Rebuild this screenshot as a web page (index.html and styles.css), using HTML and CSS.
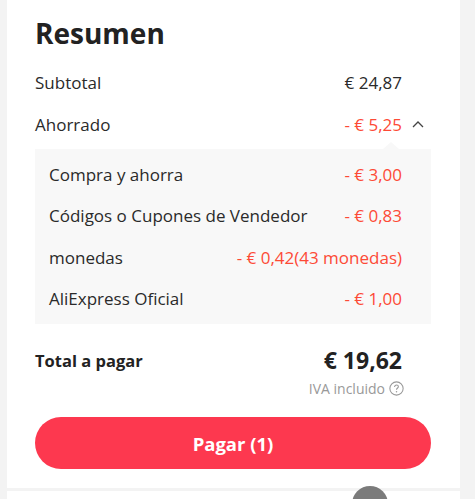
FILE: index.html
```html
<!DOCTYPE html>
<html lang="es">
<head>
<meta charset="utf-8">
<title>Resumen</title>
<link rel="stylesheet" href="styles.css">
</head>
<body>
<div class="page">
  <section class="card summary">
    <h1 class="title">Resumen</h1>
    <div class="row">
      <span class="label">Subtotal</span>
      <span class="value">€ 24,87</span>
    </div>
    <div class="row row-toggle">
      <span class="label">Ahorrado</span>
      <span class="right">
        <span class="value red">- € 5,25</span>
        <svg class="chev" width="12" height="8" viewBox="0 0 12 8"><path d="M1 7 L6 2 L11 7" fill="none" stroke="#444" stroke-width="1.3"/></svg>
      </span>
    </div>
    <div class="details">
      <div class="drow"><span>Compra y ahorra</span><span class="red">- € 3,00</span></div>
      <div class="drow"><span>Códigos o Cupones de Vendedor</span><span class="red">- € 0,83</span></div>
      <div class="drow"><span>monedas</span><span class="red">- € 0,42(43 monedas)</span></div>
      <div class="drow"><span>AliExpress Oficial</span><span class="red">- € 1,00</span></div>
    </div>
    <div class="total">
      <span class="total-label">Total a pagar</span>
      <span class="total-value">€ 19,62</span>
    </div>
    <div class="tax">
      <span>IVA incluido</span>
      <svg class="help" width="15" height="15" viewBox="0 0 14 14"><circle cx="7" cy="7" r="6.2" fill="none" stroke="#999" stroke-width="1"/><path d="M5.2 5.5 C5.2 4.4 6 3.8 7 3.8 C8 3.8 8.8 4.4 8.8 5.4 C8.8 6.5 7 6.7 7 8.2" fill="none" stroke="#999" stroke-width="1"/><circle cx="7" cy="10" r="0.7" fill="#999"/></svg>
    </div>
    <button class="pay">Pagar (1)</button>
  </section>
  <section class="card next"></section>
</div>
<div class="fab"></div>
</body>
</html>
```
FILE: styles.css
```css
html, body {
  margin: 0;
  padding: 0;
  background: #f3f3f3;
  font-family: "Open Sans", "Liberation Sans", sans-serif;
  color: #2a2a2a;
}
.page {
  padding: 0 15px 0 7px;
  display: flex;
  flex-direction: column;
  gap: 3px;
}
.card {
  background: #fff;
}
.summary {
  padding: 13px 29px 19px 28px;
  display: flex;
  flex-direction: column;
}
.title {
  margin: 0 0 8px;
  font-size: 28px;
  line-height: 40px;
  font-weight: 700;
  color: #222;
}
.row {
  height: 42px;
  display: flex;
  align-items: center;
  justify-content: space-between;
  padding-right: 29px;
  font-size: 17px;
}
.row-toggle {
  padding-right: 7px;
}
.right {
  display: flex;
  align-items: center;
}
.chev {
  margin-left: 10px;
}
.red {
  color: #fd4a36;
}
.details {
  position: relative;
  margin-top: 4px;
  background: #f8f8f8;
  padding: 5px 29px 5px 14px;
}
.details::before {
  content: "";
  position: absolute;
  top: -7px;
  left: 348px;
  border-left: 8px solid transparent;
  border-right: 8px solid transparent;
  border-bottom: 7px solid #f8f8f8;
}
.drow {
  height: 41.25px;
  display: flex;
  align-items: center;
  justify-content: space-between;
  font-size: 17px;
}
.total {
  margin-top: 18px;
  height: 36px;
  display: flex;
  align-items: center;
  justify-content: space-between;
  padding-right: 29px;
}
.total-label {
  font-size: 16.5px;
  font-weight: 700;
  color: #222;
}
.total-value {
  font-size: 23px;
  font-weight: 700;
  color: #222;
}
.tax {
  height: 20px;
  display: flex;
  align-items: center;
  justify-content: flex-end;
  gap: 4px;
  padding-right: 27px;
  font-size: 14px;
  color: #999;
}
.pay {
  margin-top: 19px;
  height: 52px;
  border: none;
  border-radius: 26px;
  background: #fd384f;
  color: #fff;
  font-family: "Open Sans", "Liberation Sans", sans-serif;
  font-size: 18.5px;
  font-weight: 700;
}
.next {
  height: 40px;
}
.fab {
  position: absolute;
  left: 352px;
  top: 486px;
  width: 36px;
  height: 36px;
  border-radius: 50%;
  background: #7b7b7b;
}
```
